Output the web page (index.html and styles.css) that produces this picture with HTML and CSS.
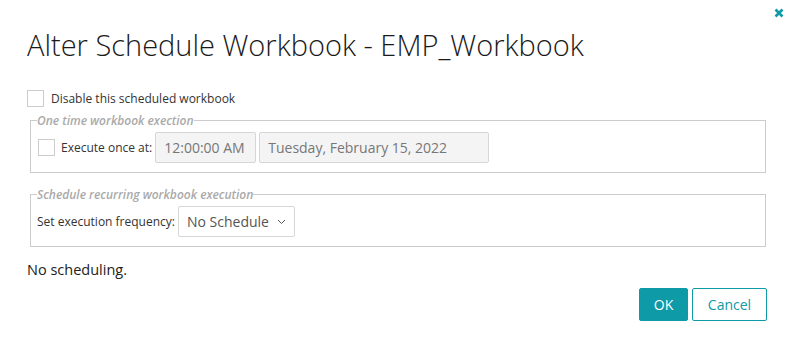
FILE: index.html
```html
<!DOCTYPE html>
<html lang="en">
<head>
    <meta charset="UTF-8">
    <title>Alter Schedule Workbook</title>
    <link rel="stylesheet" href="styles.css">
</head>
<body>
    <div class="dialog">
        <button class="close" aria-label="Close">
            <svg width="10" height="10" viewBox="0 0 10 10"><path d="M1.5 1.5 L8.5 8.5 M8.5 1.5 L1.5 8.5" stroke="#0e9aa7" stroke-width="2.6" stroke-linecap="butt"/></svg>
        </button>
        <h1 class="title">Alter Schedule Workbook - EMP_Workbook</h1>

        <label class="check-row">
            <span class="box"></span>
            <span>Disable this scheduled workbook</span>
        </label>

        <fieldset class="group">
            <legend>One time workbook exection</legend>
            <div class="row">
                <span class="box"></span>
                <span class="lbl">Execute once at:</span>
                <div class="field time">12:00:00 AM</div>
                <div class="field date">Tuesday, February 15, 2022</div>
            </div>
        </fieldset>

        <fieldset class="group recurring">
            <legend>Schedule recurring workbook execution</legend>
            <div class="row">
                <span class="lbl freq">Set execution frequency:</span>
                <div class="select">No Schedule
                    <svg width="9" height="6" viewBox="0 0 9 6"><path d="M1 1 L4.5 4.5 L8 1" stroke="#555" stroke-width="1" fill="none"/></svg>
                </div>
            </div>
        </fieldset>

        <p class="status">No scheduling.</p>

        <div class="actions">
            <button class="btn ok">OK</button>
            <button class="btn cancel">Cancel</button>
        </div>
    </div>
</body>
</html>
```

FILE: styles.css
```css
body {
    margin: 0;
    background: #ffffff;
    font-family: "Open Sans", Arial, sans-serif;
    color: #222222;
}
.dialog {
    position: relative;
    width: 794px;
    height: 348px;
    box-sizing: border-box;
    padding: 26px 27px 0 27px;
}
.close {
    position: absolute;
    top: 8px;
    right: 10px;
    border: none;
    background: none;
    padding: 0;
    width: 10px;
    height: 10px;
    cursor: pointer;
}
.close svg {
    display: block;
}
.title {
    margin: 0;
    font-size: 29px;
    font-weight: 300;
    line-height: 38px;
    color: #1a1a1a;
}
.check-row {
    display: flex;
    align-items: center;
    gap: 7px;
    margin-top: 26px;
    font-size: 12px;
    color: #333333;
}
.box {
    display: inline-block;
    width: 15px;
    height: 15px;
    border: 1px solid #cccccc;
    background: #ffffff;
    flex: none;
}
.group {
    margin: 6px 2px 0 3px;
    padding: 4px 6px 9px 6px;
    border: 1px solid #cccccc;
    width: 722px;
}
.recurring {
    margin-top: 14px;
}
.group legend {
    padding: 0;
    font-size: 12px;
    font-style: italic;
    font-weight: 600;
    color: #aaaaaa;
    line-height: 15px;
}
.row {
    display: flex;
    align-items: center;
    font-size: 12px;
    color: #333333;
}
.row .box {
    margin: 0 6px 0 1px;
}
.lbl {
    margin-right: 3px;
}
.freq {
    margin-right: 3px;
}
.field {
    height: 29px;
    border: 1px solid #d6d6d6;
    border-radius: 2px;
    background: #f4f4f4;
    color: #777777;
    font-size: 14px;
    display: flex;
    align-items: center;
    padding: 0 8px;
    box-sizing: content-box;
}
.time {
    width: 83px;
}
.date {
    width: 212px;
    margin-left: 3px;
}
.select {
    height: 29px;
    border: 1px solid #d6d6d6;
    border-radius: 2px;
    color: #555555;
    font-size: 14px;
    display: flex;
    align-items: center;
    gap: 8px;
    padding: 0 8px;
}
.status {
    margin: 13px 0 0 0;
    font-size: 14.5px;
    color: #222222;
}
.actions {
    display: flex;
    justify-content: flex-end;
    gap: 4px;
    margin-top: 9px;
}
.btn {
    height: 33px;
    border-radius: 2px;
    font-family: "Open Sans", Arial, sans-serif;
    font-size: 14px;
    cursor: pointer;
}
.ok {
    width: 49px;
    background: #0e9aa7;
    border: 1px solid #0e9aa7;
    color: #ffffff;
}
.cancel {
    width: 75px;
    background: #ffffff;
    border: 1px solid #0e9aa7;
    color: #0e9aa7;
}
```
